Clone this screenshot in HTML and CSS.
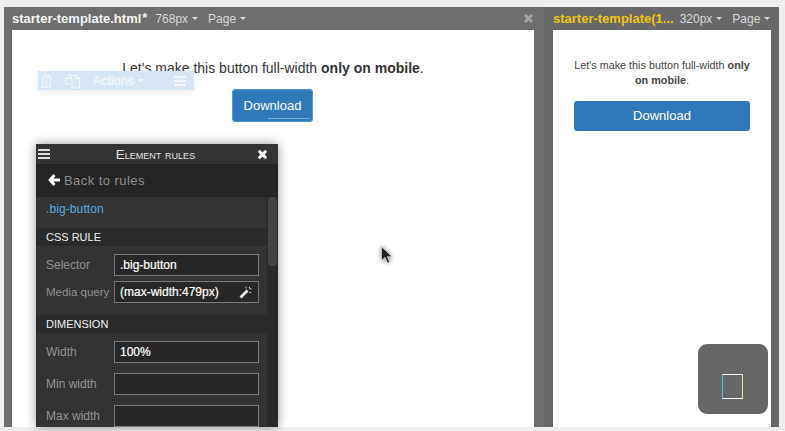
FILE: index.html
```html
<!DOCTYPE html>
<html lang="en">
<head>
<meta charset="utf-8">
<title>Starter template</title>
<link rel="stylesheet" href="styles.css">
</head>
<body>
<div class="workspace">
  <section class="device device-main">
    <header class="device-bar">
      <span class="file">starter-template.html<sup>*</sup></span>
      <span class="menu size">768px<i class="caret"></i></span>
      <span class="menu page">Page<i class="caret"></i></span>
      <svg class="close-device" width="11" height="11" viewBox="0 0 11 11"><path d="M2 2l7 7M9 2l-7 7" stroke="#a3a3a3" stroke-width="3"/></svg>
    </header>
    <div class="viewport">
      <p class="lead lead-main">Let's make this button full-width <b>only on mobile</b>.</p>
      <a class="btn btn-main">Download</a>
    </div>
  </section>
  <section class="device device-side">
    <header class="device-bar">
      <span class="file file-active">starter-template(1...</span>
      <span class="menu size">320px<i class="caret"></i></span>
      <span class="menu page">Page<i class="caret"></i></span>
    </header>
    <div class="viewport">
      <p class="lead lead-side">Let's make this button full-width <b>only on mobile</b>.</p>
      <a class="btn btn-side">Download</a>
    </div>
  </section>
</div>

<div class="toolbar">
  <svg width="11" height="14" viewBox="0 0 11 14" fill="none" stroke="#f3f8fd" stroke-width="1"><path d="M.5 3h10M3.500 3V1h4v2M1.500 3v10.500h8V3M3.500 6h4M3.500 8.500h4M3.500 11h4"/></svg>
  <svg class="tb-copy" width="15" height="16" viewBox="0 0 15 16" fill="none" stroke="#f3f8fd" stroke-width="1.100"><path d="M6 1L1 5.500v5.500h4M6 1v4.500H1M7 4.500V15h7.500V5.500H11V2.500H7.500"/><path d="M11 2.500l3.500 3"/></svg>
  <span class="tb-actions">Actions<i class="caret"></i></span>
  <span class="tb-burger"><i></i><i></i><i></i></span>
</div>

<aside class="rules">
  <div class="rules-head">
    <span class="head-burger"><i></i><i></i><i></i></span>
    <span class="rules-title">Element rules</span>
    <svg width="11" height="11" viewBox="0 0 11 11"><path d="M1.800 1.800l7.400 7.400M9.200 1.800l-7.400 7.400" stroke="#fff" stroke-width="3"/></svg>
  </div>
  <div class="back">
    <svg width="12" height="12" viewBox="0 0 12 12" fill="none" stroke="#fff" stroke-width="2.800"><path d="M6.500 1L2 6l4.500 5M2.500 6H12"/></svg>
    <span>Back to rules</span>
  </div>
  <div class="rules-body">
    <div class="selector-name">.big-button</div>
    <h3 class="section">CSS RULE</h3>
    <div class="rows rows-tight">
      <label class="row"><span>Selector</span><span class="field">.big-button</span></label>
      <label class="row"><span class="label-narrow">Media query</span><span class="field">(max-width:479px)
        <svg class="wand" width="13" height="13" viewBox="0 0 13 13"><path d="M1.500 11.500L8.500 4.500" stroke="#fff" stroke-width="2.600"/><path d="M10.500 1v1.600M12.500 3h-1.600M7 .8v1.600M12 6.500h-1.600" stroke="#ddd" stroke-width="1"/></svg></span></label>
    </div>
    <h3 class="section">DIMENSION</h3>
    <div class="rows">
      <label class="row"><span>Width</span><span class="field">100%</span></label>
      <label class="row"><span>Min width</span><span class="field"></span></label>
      <label class="row"><span>Max width</span><span class="field"></span></label>
    </div>
    <span class="scroll-thumb"></span>
  </div>
</aside>

<svg class="cursor" width="14" height="20" viewBox="0 0 14 20"><path d="M1.500 1.500v14l3.500-3 2.500 5.500 2.300-1-2.500-5.200H12z" fill="#222" stroke="#ddd" stroke-width=".8"/></svg>

<div class="badge"><span class="badge-device"></span></div>
</body>
</html>
```
FILE: styles.css
```css
* { box-sizing: border-box; }
html, body { margin: 0; height: 100%; }
body {
  position: relative;
  width: 785px;
  height: 431px;
  overflow: hidden;
  background: #eeeeee;
  font-family: "Liberation Sans", Arial, sans-serif;
  padding: 7px 6px 4px 4px;
}
.workspace {
  display: flex;
  height: 100%;
  background: #6d6d6d;
}
.device { display: flex; flex-direction: column; min-width: 0; }
.device-main { width: 540px; padding: 0 10px 0 8px; background: #6e6e6e; }
.device-side { width: 235px; padding: 0 8px 0 9px; background: #686868; }
.device-bar {
  height: 23px;
  display: flex;
  align-items: center;
  font-size: 12px;
  color: #d8d8d8;
  white-space: nowrap;
  position: relative;
}
.file { font-size: 13px; font-weight: 700; color: #f4f4f4; margin-right: 8px; }
.file sup { font-size: 13px; line-height: 0; vertical-align: baseline; position: relative; top: -1px; margin-left: 1px; }
.file-active { color: #efc513; margin-right: 6px; }
.menu { display: inline-flex; align-items: center; }
.size { margin-right: 10px; }
.caret {
  display: inline-block;
  width: 0;
  height: 0;
  margin-left: 4px;
  border-left: 3.500px solid transparent;
  border-right: 3.500px solid transparent;
  border-top: 3.500px solid currentColor;
}
.close-device { margin-left: auto; }
.viewport { flex: 1; background: #fff; text-align: center; color: #333; }
.lead { margin: 0; }
.lead-main { font-size: 14px; line-height: 20px; padding-top: 28px; }
.lead-side { font-size: 10.800px; line-height: 15px; padding: 28px 16px 0; color: #444; }
.btn { display: block; position: relative; background: #2f78b9; color: #fff; text-align: center; }
.btn-main {
  width: 81px;
  height: 33px;
  margin: 11px 0 0 220px;
  border-radius: 4px;
  font-size: 13px;
  line-height: 33px;
  box-shadow: 0 0 0 1px #4a9ad4 inset;
}
.btn-main::after {
  content: "";
  position: absolute;
  left: 36px;
  right: 3px;
  bottom: 3px;
  height: 1px;
  background: #6fb0e0;
}
.btn-side {
  width: 176px;
  height: 30px;
  margin: 13px 0 0 21px;
  border-radius: 3px;
  font-size: 13px;
  line-height: 30px;
}

.toolbar {
  position: absolute;
  left: 38px;
  top: 71px;
  width: 156px;
  height: 19px;
  background: #d6e6f6;
  box-shadow: 0 2px 6px rgba(0, 0, 0, .08);
  display: flex;
  align-items: center;
  padding-left: 3px;
  color: #f3f8fd;
  font-size: 12.500px;
}
.tb-copy { margin-left: 13px; }
.tb-actions { margin-left: 13px; display: inline-flex; align-items: center; -webkit-text-stroke: .3px #f3f8fd; }
.tb-burger { margin-left: auto; margin-right: 8px; display: flex; flex-direction: column; gap: 2px; }
.tb-burger i { display: block; width: 12px; height: 2px; background: #f3f8fd; }

.rules {
  position: absolute;
  left: 36px;
  top: 144px;
  width: 242px;
  height: 283px;
  background: #2a2a2a;
  box-shadow: 0 0 10px rgba(0, 0, 0, .4);
  color: #fff;
  overflow: hidden;
}
.rules-head {
  height: 21px;
  display: flex;
  align-items: center;
  justify-content: space-between;
  padding: 0 10px 0 2px;
  background: #333;
  border-bottom: 1px solid #222;
}
.head-burger { display: flex; flex-direction: column; gap: 2px; width: 12px; }
.head-burger i { display: block; height: 2px; background: #ddd; }
.rules-title { font-size: 13.500px; font-variant: small-caps; color: #e4e4e4; padding-left: 4px; }
.back {
  height: 32px;
  display: flex;
  align-items: center;
  gap: 4px;
  padding: 0 0 2px 12px;
  font-size: 13px;
  letter-spacing: .45px;
  color: #8e8e8e;
  background: #252525;
}
.rules-body { position: relative; }
.selector-name {
  height: 31px;
  line-height: 24px;
  padding-left: 10px;
  font-size: 12px;
  letter-spacing: .1px;
  color: #5aa9e2;
  background: #333;
  margin-right: 11px;
}
.section {
  margin: 0;
  height: 18px;
  line-height: 18px;
  padding-left: 10px;
  font-size: 11px;
  font-weight: 400;
  color: #f2f2f2;
  background: #2a2a2a;
}
.rows { background: #333; margin-right: 11px; padding: 3px 0 4px; }
.rows-tight { padding: 5px 0 10px; }
.rows-tight .row { height: 27px; }
.row {
  height: 32px;
  display: flex;
  align-items: center;
  font-size: 12px;
  color: #929292;
}
.row > span:first-child { width: 78px; padding-left: 10px; white-space: nowrap; }
.row > .label-narrow { font-size: 11.500px; }
.field {
  position: relative;
  width: 145px;
  height: 22px;
  padding-left: 5px;
  line-height: 20px;
  background: #272727;
  border: 1px solid #7b7b7b;
  color: #fff;
  font-size: 12px;
  -webkit-text-stroke: .2px #fff;
}
.wand { position: absolute; right: 6px; top: 4px; }
.scroll-thumb {
  position: absolute;
  top: 0;
  right: 1px;
  width: 9px;
  height: 69px;
  background: #444;
  border-radius: 4px;
}

.cursor { position: absolute; left: 380px; top: 245px; filter: drop-shadow(0 0 2px rgba(0, 0, 0, .5)); }

.badge {
  position: absolute;
  left: 698px;
  top: 344px;
  width: 70px;
  height: 70px;
  border-radius: 9px;
  background: #666;
  padding: 30px 0 0 24px;
}
.badge-device {
  display: block;
  width: 21px;
  height: 25px;
  border: 1px solid #fff;
  border-left-color: #5bc0e8;
  border-right-color: #f0d9a0;
}
```
